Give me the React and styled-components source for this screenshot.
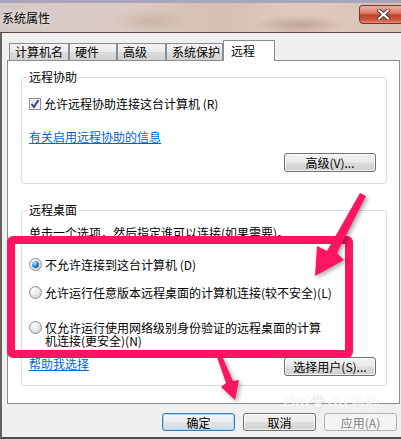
import React from 'react'
import styled, { createGlobalStyle, css } from 'styled-components'

const GlobalStyle = createGlobalStyle`
  html, body {
    margin: 0;
    padding: 0;
    background: #f0f0f0;
  }
  body {
    font-family: "Noto Sans CJK SC", "Liberation Sans", sans-serif;
    font-size: 12px;
    color: #000;
  }
`

const Window = styled.div`
  position: relative;
  width: 401px;
  height: 439px;
  display: flex;
  flex-direction: column;
  overflow: hidden;
  background: #f0f0f0;
`

const TitleBar = styled.div`
  box-sizing: border-box;
  height: 33px;
  flex-shrink: 0;
  display: flex;
  justify-content: space-between;
  align-items: flex-start;
  overflow: hidden;
  border-top: 3px solid #a9a5ba;
  border-bottom: 1px solid #5a4944;
  background:
    radial-gradient(ellipse 40px 12px at 150px 18px, rgba(190, 160, 140, 0.5), transparent),
    radial-gradient(ellipse 45px 10px at 300px 22px, rgba(150, 120, 105, 0.45), transparent),
    linear-gradient(90deg, #d3c8c6 0%, #dccbc4 30%, #d6beb3 55%, #e1cabe 75%, #d9c1b4 100%);
`

const Title = styled.span`
  margin: 8px 0 0 2px;
  font-size: 12px;
  line-height: 14px;
  color: #000;
  text-shadow: 0 0 6px rgba(255, 255, 255, 0.9);
`

const CloseButton = styled.div`
  box-sizing: border-box;
  width: 48px;
  height: 19px;
  margin: 2px -6px 0 0;
  flex-shrink: 0;
  display: flex;
  align-items: center;
  justify-content: center;
  border: 1px solid #6b3a33;
  border-radius: 3px 0 0 4px;
  background: linear-gradient(#eab0a4 0%, #dc7d6b 40%, #c6422b 55%, #cf553d 80%, #e6896f 100%);
`

const Body = styled.div`
  flex: 1;
  display: flex;
  flex-direction: column;
  border-left: 2px solid #6a605c;
  border-bottom: 2px solid #4d4d4d;
  padding-left: 5px;
`

const TabStrip = styled.div`
  display: flex;
  align-items: flex-end;
  height: 20px;
  margin-top: 7px;
  padding-left: 2px;
`

const Tab = styled.div`
  box-sizing: border-box;
  width: ${p => p.$w}px;
  height: 17px;
  padding-left: 5px;
  border: 1px solid #898c95;
  border-bottom: none;
  line-height: 16px;
  white-space: nowrap;
  background: linear-gradient(#f3f3f3 0%, #ebebeb 50%, #dddddd 51%, #d2d2d2 100%);
  ${p => p.$active && css`
    position: relative;
    z-index: 1;
    height: 21px;
    margin-bottom: -1px;
    padding-left: 7px;
    line-height: 19px;
    background: #fff;
  `}
`

const Panel = styled.div`
  box-sizing: border-box;
  width: 393px;
  height: 344px;
  display: flex;
  flex-direction: column;
  padding: 16px 12px 0 13px;
  background: #fff;
  border: 1px solid #898c95;
`

const Group = styled.div`
  box-sizing: border-box;
  height: ${p => p.$h}px;
  display: flex;
  flex-direction: column;
  padding: 0 10px 0 7px;
  border: 1px solid #d5dfe5;
  border-radius: 3px;
  & + & {
    margin-top: 26px;
  }
`

const Legend = styled.div`
  align-self: flex-start;
  margin: -8px 0 0 -2px;
  padding: 0 2px;
  line-height: 14px;
  background: #fff;
`

const Text = styled.div`
  margin-top: ${p => p.$mt || 0}px;
  line-height: 14px;
  white-space: nowrap;
`

const Row = styled.label`
  display: flex;
  align-items: flex-start;
  gap: 3px;
  margin-top: ${p => p.$mt || 0}px;
  line-height: ${p => (p.$multi ? 13 : 14)}px;
`

const RowText = styled.span`
  max-width: 282px;
  white-space: ${p => (p.$multi ? 'normal' : 'nowrap')};
`

const CheckBox = styled.span`
  box-sizing: border-box;
  width: 12px;
  height: 12px;
  margin-top: 1px;
  flex-shrink: 0;
  display: flex;
  align-items: center;
  justify-content: center;
  border: 1px solid #8e8f8f;
  background: linear-gradient(135deg, #dcdcdc, #f6f6f6);
  box-shadow: inset 0 0 0 1px #f4f4f4;
`

const Radio = styled.span`
  position: relative;
  box-sizing: border-box;
  width: 13px;
  height: 13px;
  flex-shrink: 0;
  border-radius: 50%;
  border: 1px solid #8f9092;
  background: radial-gradient(circle at 35% 30%, #ffffff 0%, #e6e6e6 50%, #c9c9c9 100%);
  ${p => p.$checked && css`
    &::after {
      content: '';
      position: absolute;
      left: 2px;
      top: 2px;
      width: 7px;
      height: 7px;
      border-radius: 50%;
      background: radial-gradient(circle at 35% 30%, #bfe8ff 0%, #2e8fd8 45%, #0b3f7a 100%);
    }
  `}
`

const Link = styled.span`
  margin-top: ${p => p.$mt || 0}px;
  align-self: flex-start;
  line-height: 14px;
  color: #0066cc;
  text-decoration: underline;
`

const Button = styled.div`
  box-sizing: border-box;
  width: ${p => p.$w}px;
  height: ${p => p.$h || 19}px;
  margin-top: ${p => p.$mt || 0}px;
  align-self: ${p => p.$align || 'auto'};
  flex-shrink: 0;
  display: flex;
  align-items: center;
  justify-content: center;
  white-space: nowrap;
  border: 1px solid #707070;
  border-radius: 3px;
  background: linear-gradient(#f2f2f2 0%, #ebebeb 48%, #dddddd 52%, #cfcfcf 100%);
  box-shadow: inset 0 0 0 1px rgba(255, 255, 255, 0.75);
  ${p => p.$default && css`
    border-color: #3c7fb1;
    box-shadow: inset 0 0 0 1px #a9d9f6;
    background: linear-gradient(#f4f7f9 0%, #e9eef2 48%, #dde5ea 52%, #d2dce3 100%);
  `}
  ${p => p.$disabled && css`
    color: #838383;
    border-color: #adb2b5;
    box-shadow: none;
    background: #f4f4f4;
  `}
`

const FooterRow = styled.div`
  display: flex;
  justify-content: space-between;
  align-items: center;
  margin-top: 10px;
`

const ButtonRow = styled.div`
  display: flex;
  justify-content: flex-end;
  gap: 8px;
  margin-top: 9px;
  padding-right: 4px;
`

const RedFrame = styled.div`
  position: absolute;
  left: 7px;
  top: 236px;
  width: 346px;
  height: 122px;
  box-sizing: border-box;
  border: 8px solid #fe1461;
  border-radius: 6px;
  pointer-events: none;
`

const Arrows = styled.svg`
  position: absolute;
  left: 0;
  top: 0;
  pointer-events: none;
  filter: drop-shadow(2px 2px 2px rgba(0, 0, 0, 0.35));
`

const Watermark = styled.div`
  position: absolute;
  left: 283px;
  top: 392px;
  display: flex;
  align-items: center;
  gap: 1px;
  font-family: "Liberation Sans", "Noto Sans CJK SC", sans-serif;
  font-weight: bold;
  font-size: 17px;
  color: rgba(255, 255, 255, 0.85);
  text-shadow: 0 0 1px rgba(150, 150, 150, 0.35);
  opacity: 0.8;
  pointer-events: none;
`

const WatermarkCjk = styled.span`
  margin-left: 2px;
  font-size: 14px;
  font-family: "Noto Sans CJK SC", sans-serif;
`

const CloseIcon = () => (
  <svg width="13" height="11" viewBox="0 0 13 11">
    <path d="M2 1.5 L11 9.5 M11 1.5 L2 9.5" stroke="#4b3a3a" strokeWidth="4" strokeLinecap="square" />
    <path d="M2 1.5 L11 9.5 M11 1.5 L2 9.5" stroke="#ffffff" strokeWidth="2" strokeLinecap="square" />
  </svg>
)

const CheckIcon = () => (
  <svg width="10" height="10" viewBox="0 0 10 10">
    <path d="M1.5 5 L4 8 L8.5 1" fill="none" stroke="#2a3b8f" strokeWidth="1.8" />
  </svg>
)

const Paw = () => (
  <svg width="16" height="16" viewBox="0 0 16 16">
    <g fill="rgba(255,255,255,0.85)" stroke="rgba(150,150,150,0.4)" strokeWidth="0.8">
      <ellipse cx="8" cy="11" rx="4" ry="3.2" />
      <circle cx="3" cy="6.5" r="1.8" />
      <circle cx="6" cy="3.5" r="1.8" />
      <circle cx="10" cy="3.5" r="1.8" />
      <circle cx="13" cy="6.5" r="1.8" />
    </g>
  </svg>
)

const tabs = [
  { label: '计算机名', w: 60 },
  { label: '硬件', w: 48 },
  { label: '高级', w: 49 },
  { label: '系统保护', w: 57 },
  { label: '远程', w: 52, active: true },
]

export default function App() {
  return (
    <>
      <GlobalStyle />
      <Window>
        <TitleBar>
          <Title>系统属性</Title>
          <CloseButton>
            <CloseIcon />
          </CloseButton>
        </TitleBar>
        <Body>
          <TabStrip>
            {tabs.map(t => (
              <Tab key={t.label} $w={t.w} $active={t.active}>{t.label}</Tab>
            ))}
          </TabStrip>
          <Panel>
            <Group $h={107}>
              <Legend>远程协助</Legend>
              <Row $mt={13}>
                <CheckBox><CheckIcon /></CheckBox>
                <RowText>允许远程协助连接这台计算机 (R)</RowText>
              </Row>
              <Link $mt={19}>有关启用远程协助的信息</Link>
              <Button $w={92} $mt={9} $align="flex-end">高级(V)...</Button>
            </Group>
            <Group $h={176}>
              <Legend>远程桌面</Legend>
              <Text $mt={9}>单击一个选项，然后指定谁可以连接(如果需要)。</Text>
              <Row $mt={18}>
                <Radio $checked />
                <RowText>不允许连接到这台计算机 (D)</RowText>
              </Row>
              <Row $mt={14}>
                <Radio />
                <RowText>允许运行任意版本远程桌面的计算机连接(较不安全)(L)</RowText>
              </Row>
              <Row $mt={21} $multi>
                <Radio />
                <RowText $multi>仅允许运行使用网络级别身份验证的远程桌面的计算机连接(更安全)(N)</RowText>
              </Row>
              <FooterRow>
                <Link>帮助我选择</Link>
                <Button $w={92}>选择用户(S)...</Button>
              </FooterRow>
            </Group>
          </Panel>
          <ButtonRow>
            <Button $w={73} $h={18} $default>确定</Button>
            <Button $w={73} $h={18}>取消</Button>
            <Button $w={73} $h={18} $disabled>应用(A)</Button>
          </ButtonRow>
        </Body>

        <Watermark>
          Bai<Paw />du<WatermarkCjk>经验</WatermarkCjk>
        </Watermark>
        <RedFrame />
        <Arrows width="401" height="439" viewBox="0 0 401 439">
          <polygon
            points="360,193 366,196 337,253 344,260 315,276 317,246 327,251"
            fill="#fe1461"
          />
          <polygon
            points="217,357 222,356 233,381 239,380 235,400 221,387 226,383"
            fill="#fe1461"
          />
        </Arrows>
      </Window>
    </>
  )
}
